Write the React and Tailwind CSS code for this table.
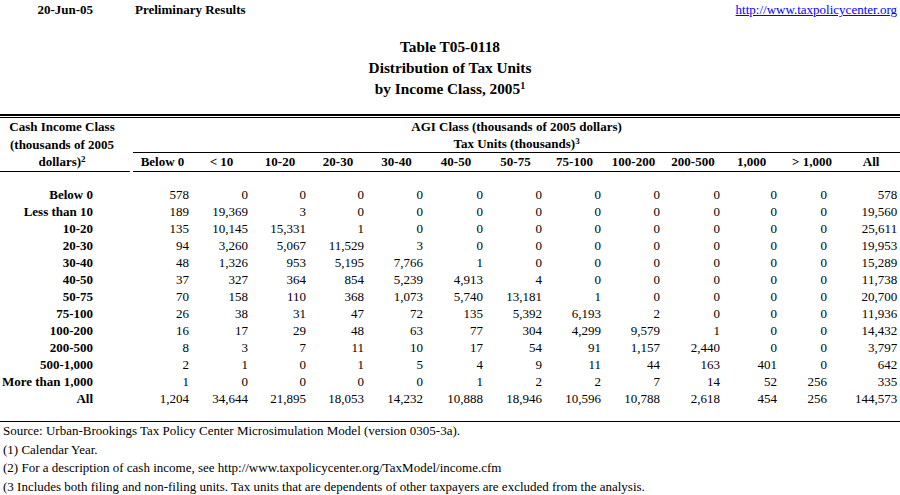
import React from 'react'

const cols = ["Below 0", "< 10", "10-20", "20-30", "30-40", "40-50", "50-75", "75-100", "100-200", "200-500", "1,000", "> 1,000", "All"]

const rows = [
    ["Below 0", "578", "0", "0", "0", "0", "0", "0", "0", "0", "0", "0", "0", "578"],
    ["Less than 10", "189", "19,369", "3", "0", "0", "0", "0", "0", "0", "0", "0", "0", "19,560"],
    ["10-20", "135", "10,145", "15,331", "1", "0", "0", "0", "0", "0", "0", "0", "0", "25,611"],
    ["20-30", "94", "3,260", "5,067", "11,529", "3", "0", "0", "0", "0", "0", "0", "0", "19,953"],
    ["30-40", "48", "1,326", "953", "5,195", "7,766", "1", "0", "0", "0", "0", "0", "0", "15,289"],
    ["40-50", "37", "327", "364", "854", "5,239", "4,913", "4", "0", "0", "0", "0", "0", "11,738"],
    ["50-75", "70", "158", "110", "368", "1,073", "5,740", "13,181", "1", "0", "0", "0", "0", "20,700"],
    ["75-100", "26", "38", "31", "47", "72", "135", "5,392", "6,193", "2", "0", "0", "0", "11,936"],
    ["100-200", "16", "17", "29", "48", "63", "77", "304", "4,299", "9,579", "1", "0", "0", "14,432"],
    ["200-500", "8", "3", "7", "11", "10", "17", "54", "91", "1,157", "2,440", "0", "0", "3,797"],
    ["500-1,000", "2", "1", "0", "1", "5", "4", "9", "11", "44", "163", "401", "0", "642"],
    ["More than 1,000", "1", "0", "0", "0", "0", "1", "2", "2", "7", "14", "52", "256", "335"],
    ["All", "1,204", "34,644", "21,895", "18,053", "14,232", "10,888", "18,946", "10,596", "10,788", "2,618", "454", "256", "144,573"],
]

// widths of the 13 AGI columns (start at x=133)
const colWidths = ["w-[59px]", "w-[59px]", "w-[58px]", "w-[58px]", "w-[59px]", "w-[60px]", "w-[59px]", "w-[59px]", "w-[59px]", "w-[60px]", "w-[57px]", "w-[50px]", "w-[70px]"]

function App() {
    return (
        <div className="w-[900px] h-[495px] overflow-hidden bg-white text-black font-['Liberation_Serif','Times_New_Roman',serif] text-[13px]">
            {/* Top row */}
            <div className="flex h-[20px] items-center">
                <div className="w-[130px] pr-[37px] text-right font-bold">20-Jun-05</div>
                <div className="pl-[5px] font-bold">Preliminary Results</div>
                <a href="#" className="ml-auto pr-[3px] text-[#0000ff] underline">http://www.taxpolicycenter.org</a>
            </div>

            {/* Title */}
            <div className="mt-[16px] text-center font-bold text-[15.3px] leading-[21px]">
                <div>Table T05-0118</div>
                <div>Distribution of Tax Units</div>
                <div>by Income Class, 2005<sup className="text-[10px]">1</sup></div>
            </div>

            {/* Double rule */}
            <div className="mt-[15px] h-[4px] border-t-2 border-b border-black" />

            <table className="w-[900px] table-fixed border-collapse">
                <colgroup>
                    <col className="w-[130px]" />
                    <col className="w-[3px]" />
                    {colWidths.map((w, i) => <col key={i} className={w} />)}
                </colgroup>
                <tbody>
                    <tr className="h-[17px]">
                        <td rowSpan={3} className="border-b border-black pr-[6px] text-center align-bottom font-bold leading-[17.5px] whitespace-nowrap">
                            Cash Income Class<br />(thousands of 2005<br />dollars)<sup className="text-[9px]">2</sup>
                        </td>
                        <td rowSpan={3} />
                        <td colSpan={13} className="text-center font-bold leading-[17px]">AGI Class (thousands of 2005 dollars)</td>
                    </tr>
                    <tr className="h-[17px]">
                        <td colSpan={13} className="border-b border-black text-center font-bold leading-[17px]">
                            Tax Units (thousands)<sup className="text-[9px]">3</sup>
                        </td>
                    </tr>
                    <tr className="h-[18px]">
                        {cols.map((c, i) => (
                            <td key={c} className={`border-b border-black text-center font-bold leading-[17px] whitespace-nowrap ${i >= 11 ? "pl-[12px]" : ""}`}>{c}</td>
                        ))}
                    </tr>
                    <tr className="h-[15px]"><td colSpan={15} /></tr>
                    {rows.map((r) => (
                        <tr key={r[0]} className="h-[17px] leading-[17px]">
                            <td className="pr-[37px] text-right font-bold whitespace-nowrap">{r[0]}</td>
                            <td />
                            {r.slice(1).map((v, i) => (
                                <td key={i} className="pr-[3px] text-right">{v}</td>
                            ))}
                        </tr>
                    ))}
                    <tr className="h-[14px]"><td colSpan={15} /></tr>
                </tbody>
            </table>

            {/* Notes */}
            <div className="border-t border-black pl-[3px] leading-[18.5px]">
                <div>Source: Urban-Brookings Tax Policy Center Microsimulation Model (version 0305-3a).</div>
                <div>(1) Calendar Year.</div>
                <div>(2) For a description of cash income, see http://www.taxpolicycenter.org/TaxModel/income.cfm</div>
                <div>(3 Includes both filing and non-filing units. Tax units that are dependents of other taxpayers are excluded from the analysis.</div>
            </div>
        </div>
    )
}

export default App
